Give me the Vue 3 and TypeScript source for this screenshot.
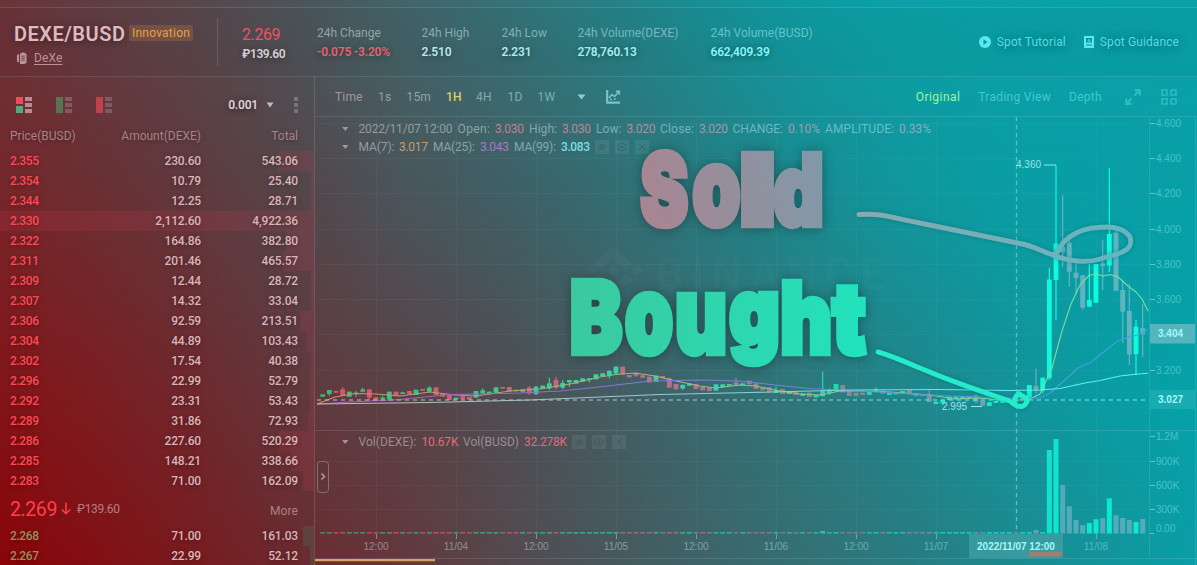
<script setup lang="ts">
interface Row { p: string; a: string; t: string; w: number }
interface Stat { label: string; value: string; lc: string; vc: string }
interface Candle { x: number; up: boolean; top: number; bot: number; hi: number; lo: number }
interface Letter { c: string; x: number; y: number; w: number; s: number }

const stats: Stat[] = [
  { label: '24h Change', value: '-0.075 -3.20%', lc: '#93a4a9', vc: '#e9606e' },
  { label: '24h High', value: '2.510', lc: '#87abb0', vc: '#bfe4e6' },
  { label: '24h Low', value: '2.231', lc: '#7fb1b5', vc: '#b3e9ea' },
  { label: '24h Volume(DEXE)', value: '278,760.13', lc: '#74b8bb', vc: '#a0eeee' },
  { label: '24h Volume(BUSD)', value: '662,409.39', lc: '#64c4c8', vc: '#86f6f6' },
]

const asks: Row[] = [
  { p: '2.355', a: '230.60', t: '543.06', w: 36 },
  { p: '2.354', a: '10.79', t: '25.40', w: 3 },
  { p: '2.344', a: '12.25', t: '28.71', w: 3 },
  { p: '2.330', a: '2,112.60', t: '4,922.36', w: 314 },
  { p: '2.322', a: '164.86', t: '382.80', w: 27 },
  { p: '2.311', a: '201.46', t: '465.57', w: 31 },
  { p: '2.309', a: '12.44', t: '28.72', w: 3 },
  { p: '2.307', a: '14.32', t: '33.04', w: 3 },
  { p: '2.306', a: '92.59', t: '213.51', w: 14 },
  { p: '2.304', a: '44.89', t: '103.43', w: 7 },
  { p: '2.302', a: '17.54', t: '40.38', w: 3 },
  { p: '2.296', a: '22.99', t: '52.79', w: 4 },
  { p: '2.292', a: '23.31', t: '53.43', w: 4 },
  { p: '2.289', a: '31.86', t: '72.93', w: 6 },
  { p: '2.286', a: '227.60', t: '520.29', w: 35 },
  { p: '2.285', a: '148.21', t: '338.66', w: 23 },
  { p: '2.283', a: '71.00', t: '162.09', w: 11 },
]
const bids: Row[] = [
  { p: '2.268', a: '71.00', t: '161.03', w: 11 },
  { p: '2.267', a: '22.99', t: '52.12', w: 4 },
]

const frames = [
  { t: 'Time', w: 43, c: '#a2999d' },
  { t: '1s', w: 28.5, c: '#9c9ca0' },
  { t: '15m', w: 39.5, c: '#93a1a5' },
  { t: '1H', w: 30, c: '#dccb6c' },
  { t: '4H', w: 31.5, c: '#86a9ad' },
  { t: '1D', w: 30, c: '#80adb1' },
  { t: '1W', w: 39.5, c: '#7ab1b5' },
]

// Direction, body top/bottom and optional wick high/low, in thirds of a pixel below y = 375.
const small = `u58,65 u45,57,45,62 d48,53 d43,62,37,62 u50,65 u53,57,48,65 u43,50,38,52 d43,68,43,75 d67,77 u68,73,62,75
u50,73 d50,62 u52,57 d48,57 u44,60 d42,47 u38,50,34,50 d37,60 d57,65 d60,75 u68,74 d64,72,60,75 d66,74 u48,68 u46,55,40,58 u50,58
u37,53 d36,41 d36,50 d44,49 u43,50 d38,55,33,60 u35,57,33,60 u32,42 u25,40,8,45 d15,38,5,42 u24,38,15,42 u15,22,15,35 u15,26 u10,20
u10,15,10,22 u-2,13 u-5,3 u-12,1,-15,10 u-25,-4 d-25,-2 d0,7 d-5,2,-8,6 d1,8 d5,22 u2,20 d3,10 d10,38 d27,43 u30,40,28,45 u25,32
d27,42 d36,46 d38,48 u28,47 u28,37 u27,32 d22,32,8,32 u25,31 d17,28 d25,42 d37,46 d37,52 u45,54,35,54 d42,57 u48,57 d50,60
u55,63 d53,66 u60,67 u48,64,-10,64 u45,55,40,60 u27,48 d30,52 d48,63 d53,63 d53,60 u50,60 u42,48,37,52 d47,56 u53,60 u52,58 u48,57
d45,58 d55,63 d57,63 d57,81,42,81 u80,87 u75,85,72,90 u65,75 u64,72 u64,72 u64,70 d62,80,58,85 d77,92 u82,93 u77,84 u77,84 u76,84
d74,82 u60,75 u30,73,30,82 d33,47,-20,55 u8,47,8,55`

const xAt = (i: number): number => 322.67 + i * (20 / 3)

const candles: Candle[] = small.trim().split(/\s+/).map((s, i) => {
  const n = s.slice(1).split(',').map(v => 375 + Number(v) / 3)
  return { x: xAt(i), up: s[0] === 'u', top: n[0], bot: n[1], hi: n[2] ?? n[0], lo: n[3] ?? n[1] }
})
const large: [number, boolean, number, number, number, number][] = [
  [109, true, 279.5, 378.3, 267.7, 380], [110, true, 243.5, 280, 165, 320], [111, false, 247, 252, 195, 267],
  [112, false, 242.7, 271.7, 240, 287], [113, false, 272.7, 278, 258, 294], [114, false, 275.3, 307.7, 275, 309.5],
  [115, true, 300, 306.7, 264, 306.7], [116, true, 264, 302.7, 264, 302.7], [117, false, 263.5, 266, 240, 290],
  [118, true, 234, 265.5, 168, 272], [119, false, 232.7, 290.7, 229, 290.7], [120, false, 290, 311.7, 281, 343],
  [121, false, 311, 354.5, 284, 365], [122, true, 326.7, 354, 320, 375], [123, false, 328, 334, 304, 356.7],
]
large.forEach(([i, up, top, bot, hi, lo]) => candles.push({ x: xAt(i), up, top, bot, hi, lo }))

const volTop: Record<number, number> = {
  75: 531, 107: 530, 109: 450, 110: 439, 111: 485, 112: 506.3, 113: 520, 114: 525.3, 115: 523, 116: 519.3,
  117: 518.3, 118: 498.3, 119: 515.3, 120: 518, 121: 520, 122: 522, 123: 519,
}
const volumes = candles.map((c, i) => ({ x: c.x, up: c.up, y: volTop[i] ?? 532.2 }))

const vGrid = [376, 456, 536, 616, 696, 776, 856, 936, 1016, 1096]
const hGrid = [123.5, 158.5, 193.5, 229.5, 264.5, 299.5, 334.5, 370.5, 461.5, 485.5, 509.5]
const prices = [
  ['4.600', 123.5], ['4.400', 158.5], ['4.200', 193.5], ['4.000', 229], ['3.800', 264], ['3.600', 299], ['3.200', 370],
  ['1.2M', 436], ['900K', 461], ['600K', 485], ['300K', 509],
] as [string, number][]
const dates = [
  ['12:00', 376], ['11/04', 456], ['12:00', 536], ['11/05', 616], ['12:00', 696], ['11/06', 776],
  ['12:00', 856], ['11/07', 936], ['11/08', 1096],
] as [string, number][]

const ohlc: [string, string, number][] = [
  ['Open:', '3.030', 457.5], ['High:', '3.030', 529], ['Low:', '3.020', 596], ['Close:', '3.020', 660],
  ['CHANGE:', '0.10%', 732.5], ['AMPLITUDE:', '0.33%', 825],
]
const valueX = [495, 562, 626.5, 699, 788, 899]

// Each letter has its own width and size, which gives the words their tall, tight poster shape.
const sold: Letter[] = [
  { c: 'S', x: 640.5, y: 225, w: 47.5, s: 99 },
  { c: 'o', x: 692.5, y: 225, w: 48, s: 106 },
  { c: 'l', x: 739, y: 225, w: 37, s: 97 },
  { c: 'd', x: 773.5, y: 225, w: 50, s: 97 },
]
const bought: Letter[] = [
  { c: 'B', x: 570, y: 352.5, w: 52, s: 99 },
  { c: 'o', x: 625, y: 352.5, w: 48, s: 106 },
  { c: 'u', x: 675, y: 352.5, w: 52, s: 106 },
  { c: 'g', x: 729.5, y: 343.5, w: 50, s: 91 },
  { c: 'h', x: 780.5, y: 352.5, w: 51.5, s: 97 },
  { c: 't', x: 832.5, y: 352.5, w: 33, s: 97 },
]
</script>

<template>
  <div class="screen">
    <div class="tint t4"></div>
    <div class="tint t3"></div>
    <div class="tint t2"></div>
    <div class="tint t1"></div>

    <div class="page">
      <div class="strip"></div>
      <header class="header">
        <div class="pair">
          <div class="pair-top"><span class="symbol">DEXE/BUSD</span><span class="badge">Innovation</span></div>
          <div class="pair-sub">
            <svg width="10" height="12" viewBox="0 0 10 12"><path d="M0 3 2 2V10.500L0 9.500ZM3 2l2-1.500h2L9.500 2v9L7 12H3Z" fill="#b99499" /><path d="M4.300 4.200h3.500M4.300 6.200h3.500M4.300 8.200h3.500" stroke="#6d4247" /></svg>
            <a>DeXe</a>
          </div>
        </div>
        <div class="stats">
          <div class="stat last"><span class="big">2.269</span><b>₽139.60</b></div>
          <div v-for="s in stats" :key="s.label" class="stat">
            <span class="label" :style="{ color: s.lc }">{{ s.label }}</span>
            <b :style="{ color: s.vc }">{{ s.value }}</b>
          </div>
        </div>
        <div class="links">
          <svg width="12" height="12" viewBox="0 0 12 12"><circle cx="6" cy="6" r="6" fill="#5be8ef" /><path d="M4.500 3.300 8.500 6l-4 2.700Z" fill="#0a949b" /></svg>
          <span>Spot Tutorial</span>
          <svg class="doc" width="10" height="12" viewBox="0 0 10 12"><path d="M0 0h10v12H0Z" fill="#5be8ef" /><path d="M2 2h6v4.500H2ZM2 8.500h6v1H2Z" fill="#0a949b" /><path d="M3.500 5h3M5 3v1.500" stroke="#5be8ef" /></svg>
          <span>Spot Guidance</span>
        </div>
      </header>

      <main class="main">
        <section class="book">
          <div class="book-tools">
            <svg width="16" height="16" viewBox="0 0 16 16"><path d="M0 0h7v7H0Z" fill="#f6475d" /><path d="M0 9h7v7H0Z" fill="#55a878" /><path d="M9 0h7v4H9ZM9 6h7v4H9ZM9 12h7v4H9Z" fill="#b98a92" /></svg>
            <svg width="16" height="16" viewBox="0 0 16 16"><path d="M0 0h7v16H0Z" fill="#587455" /><path d="M9 0h7v4H9ZM9 6h7v4H9ZM9 12h7v4H9Z" fill="#85595f" /></svg>
            <svg width="16" height="16" viewBox="0 0 16 16"><path d="M0 0h7v16H0Z" fill="#c0414e" /><path d="M9 0h7v4H9ZM9 6h7v4H9ZM9 12h7v4H9Z" fill="#7d5b62" /></svg>
            <b class="tick">0.001</b>
            <svg width="8" height="6" viewBox="0 0 8 6"><path d="M.5 .5h7L4 5.500Z" fill="#c3b7bb" /></svg>
            <svg class="dots" width="4" height="16" viewBox="0 0 4 16"><g fill="#7d7377"><rect width="4" height="4" rx="1" /><rect y="6" width="4" height="4" rx="1" /><rect y="12" width="4" height="4" rx="1" /></g></svg>
          </div>
          <div class="row head"><span>Price(BUSD)</span><span>Amount(DEXE)</span><span>Total</span></div>
          <div v-for="r in asks" :key="r.p" class="row ask">
            <i :style="{ width: r.w + 'px' }"></i><span>{{ r.p }}</span><span>{{ r.a }}</span><span>{{ r.t }}</span>
          </div>
          <div class="mid">
            <span class="now">2.269</span>
            <svg width="10" height="13" viewBox="0 0 10 13"><path d="M5 .5v11M.8 7.500 5 11.700 9.200 7.500" fill="none" stroke="#ff4048" stroke-width="1.500" /></svg>
            <span class="fiat">₽139.60</span><span class="more">More</span>
          </div>
          <div v-for="r in bids" :key="r.p" class="row bid">
            <i :style="{ width: r.w + 'px' }"></i><span>{{ r.p }}</span><span>{{ r.a }}</span><span>{{ r.t }}</span>
          </div>
        </section>

        <section class="chart">
          <nav class="toolbar">
            <span v-for="f in frames" :key="f.t" :class="{ on: f.t === '1H' }" :style="{ width: f.w + 'px', color: f.c }">{{ f.t }}</span>
            <svg class="caret" width="9" height="6" viewBox="0 0 9 6"><path d="M.5 .5h8l-4 5Z" fill="#8cd0d3" /></svg>
            <svg width="15" height="14" viewBox="0 0 15 14"><path d="M1.200 0v12.700H14" fill="none" stroke="#79c4c9" stroke-width="2.200" /><path d="M3 8 6 4.500 8.500 6.500 13 1.500M10 1.200h3.300V4.500" fill="none" stroke="#79c4c9" stroke-width="1.600" /><path d="M4 9.500h2M8 9h1.800" stroke="#79c4c9" stroke-width="1.500" /></svg>
            <div class="modes">
              <span class="sel">Original</span><span>Trading View</span><span>Depth</span>
              <svg width="16" height="16" viewBox="0 0 16 16"><path d="M9.500 1.200H14.800V6.500M14.500 1.500 9.500 6.500M1.200 9.500V14.800H6.500M1.500 14.500 6.500 9.500" fill="none" stroke="#2fbac2" stroke-width="2.200" /></svg>
              <svg width="16" height="16" viewBox="0 0 16 16"><path d="M1 1h5v5H1ZM10 1h5v5h-5ZM1 10h5v5H1ZM10 10h5v5h-5Z" fill="none" stroke="#2fbac2" stroke-width="1.600" /></svg>
            </div>
          </nav>

          <svg class="plot" width="882" height="448" viewBox="315 117 882 448">
            <defs>
              <linearGradient id="up" gradientUnits="userSpaceOnUse" x1="316" y1="0" x2="1060" y2="0">
                <stop offset="0" stop-color="#42b47e" /><stop offset=".4" stop-color="#38d3a3" /><stop offset=".75" stop-color="#22d8b3" /><stop offset="1" stop-color="#0ffbdc" />
              </linearGradient>
              <linearGradient id="down" gradientUnits="userSpaceOnUse" x1="316" y1="0" x2="1060" y2="0">
                <stop offset="0" stop-color="#de5266" /><stop offset=".4" stop-color="#bd6f82" /><stop offset=".72" stop-color="#938493" /><stop offset="1" stop-color="#62b3bf" />
              </linearGradient>
              <linearGradient id="ma7" gradientUnits="userSpaceOnUse" x1="316" y1="0" x2="1140" y2="0">
                <stop offset="0" stop-color="#c8925a" /><stop offset="1" stop-color="#76dfa8" />
              </linearGradient>
              <linearGradient id="ma25" gradientUnits="userSpaceOnUse" x1="316" y1="0" x2="1140" y2="0">
                <stop offset="0" stop-color="#b45abf" /><stop offset="1" stop-color="#3aa6df" />
              </linearGradient>
              <linearGradient id="ma99" gradientUnits="userSpaceOnUse" x1="316" y1="0" x2="1140" y2="0">
                <stop offset="0" stop-color="#c4b4bd" /><stop offset=".6" stop-color="#7fd6d8" /><stop offset="1" stop-color="#52f7f7" />
              </linearGradient>
              <linearGradient id="txt" gradientUnits="userSpaceOnUse" x1="330" y1="0" x2="940" y2="0">
                <stop offset="0" stop-color="#9c9599" /><stop offset="1" stop-color="#5ac7cd" />
              </linearGradient>
              <linearGradient id="val" gradientUnits="userSpaceOnUse" x1="480" y1="0" x2="940" y2="0">
                <stop offset="0" stop-color="#bf7f8c" /><stop offset="1" stop-color="#82b1bb" />
              </linearGradient>
              <linearGradient id="dat" gradientUnits="userSpaceOnUse" x1="350" y1="0" x2="1110" y2="0">
                <stop offset="0" stop-color="#9c8286" /><stop offset=".5" stop-color="#82a2a6" /><stop offset="1" stop-color="#4bbbc1" />
              </linearGradient>
            </defs>

            <g class="grid">
              <path v-for="x in vGrid" :key="'v' + x" :d="`M${x + .5} 117V533`" />
              <path v-for="y in hGrid" :key="'h' + y" :d="`M317 ${y}H1149`" />
            </g>
            <g class="mark">
              <path d="M594 264 613 246 632 264 626 270 613 258 600 270ZM608 270l5-5 5 5-5 5ZM586 270l5-5 5 5-5 5ZM631 270l6-6 6 6-6 6ZM600 274l13 12 13-12 6 6-19 18-19-18Z" />
              <text x="656" y="289" textLength="229">BINANCE</text>
            </g>
            <path class="rule" d="M315 430.500H1197M315 558.500H1197M1149.500 117V558M1195.500 117V565" />

            <g class="axis">
              <template v-for="[t, y] in prices" :key="t">
                <path :d="`M1150 ${Math.floor(y) + .5}h5`" />
                <text x="1156" :y="y + 3.700">{{ t }}</text>
              </template>
              <text x="1156" y="532">0.00</text><path d="M1150 533.500h4" />
            </g>
            <g class="dates">
              <template v-for="[t, x] in dates" :key="t + x">
                <path :d="`M${x + .5} 534v5`" /><text :x="x" y="549.500">{{ t }}</text>
              </template>
            </g>

            <g opacity=".8">
              <rect v-for="v in volumes" :key="v.x" :x="v.x - 2.500" :y="v.y" width="5" :height="533.500 - v.y" :fill="v.up ? 'url(#up)' : 'url(#down)'" />
            </g>
            <g>
              <template v-for="c in candles" :key="c.x">
                <rect :x="c.x - .6" :y="c.hi" width="1.200" :height="c.lo - c.hi" :fill="c.up ? 'url(#up)' : 'url(#down)'" />
                <rect :x="c.x - 2.400" :y="c.top" width="4.800" :height="c.bot - c.top" :fill="c.up ? 'url(#up)' : 'url(#down)'" />
              </template>
            </g>
            <g class="ma">
              <polyline stroke="url(#ma7)" points="317,404 335,397 355,393.500 376,394 400,396 430,392 455,395 476,396 510,391 540,389 570,384 600,377 616,374.500 635,373 655,376 676,381 700,386 715,388 740,385 755,386 780,391 800,394 820,395 840,391 860,391 890,392 930,395 955,399 980,398 1010,401 1030,399 1040,394 1052,368 1062,331 1071,304 1080,285 1089,275.500 1096,274 1103,276 1110,274.500 1118,277 1128,286 1136,292 1142,299 1148,311" />
              <polyline stroke="url(#ma25)" points="317,404 350,402 400,399.500 450,394.500 520,393 560,391 590,388 620,384.500 650,381 700,380 740,381 775,385 810,388.500 860,391 950,396 1010,398 1040,398 1050,393 1065,380 1078,368 1091,362 1105,351 1116,342 1128,337 1140,334.500 1148,329" />
              <polyline stroke="url(#ma99)" points="317,404 430,402.500 530,400 600,397 660,394.500 750,392.500 850,390 940,389.500 1010,390.500 1040,390 1060,388.500 1085,383 1100,380.500 1120,376 1135,374.300 1148,373.300" />
            </g>
            <path class="cross" d="M317 400H1149" stroke="url(#ma99)" />
            <path class="cross" d="M1016.500 117V533" stroke="#76cfd2" />
            <g class="peaks"><text x="1016" y="168">4.360</text><path d="M1044 165h12" /><text x="942" y="410">2.995</text><path d="M971 406.500h11" /></g>

            <g class="tags">
              <rect x="1150" y="324" width="45" height="19.500" fill="#55b5bd" /><text x="1170.500" y="337.300">3.404</text>
              <rect x="1150" y="390" width="45" height="19" fill="#18abb1" /><text x="1170.500" y="403.300">3.027</text>
              <rect x="969" y="534" width="94" height="24" fill="#42a0a4" fill-opacity=".75" /><text x="1016" y="549.500">2022/11/07 12:00</text>
            </g>
            <rect x="1029" y="552" width="33" height="4.500" rx="1" fill="#a17f70" />

            <g class="legend">
              <path v-for="y in [127, 145, 440]" :key="y" :d="`M342 ${y}h6.500l-3.200 4Z`" fill="url(#txt)" />
              <text x="358.500" y="133" textLength="94">2022/11/07 12:00</text>
              <template v-for="([k, v, x], i) in ohlc" :key="k">
                <text :x="x" y="133" :textLength="valueX[i] - x - 5">{{ k }}</text>
                <text :x="valueX[i]" y="133" :textLength="i > 3 ? 32 : 29" fill="url(#val)">{{ v }}</text>
              </template>
              <text x="358.500" y="151" textLength="36">MA(7):</text><text x="399" y="151" textLength="29" class="c7">3.017</text>
              <text x="433" y="151" textLength="42">MA(25):</text><text x="480" y="151" textLength="29" class="c25">3.043</text>
              <text x="514" y="151" textLength="42">MA(99):</text><text x="561" y="151" textLength="29" class="c99">3.083</text>
              <text x="358.500" y="446" textLength="58" class="muted">Vol(DEXE):</text><text x="421.500" y="446" textLength="37" class="red">10.67K</text>
              <text x="463" y="446" textLength="56" class="muted">Vol(BUSD)</text><text x="524" y="446" textLength="43" class="red">32.278K</text>
              <g v-for="[x, y] in [[595, 140], [572, 435]]" :key="x" :transform="`translate(${x} ${y})`">
                <path class="box" d="M0 0h14v14H0ZM20 0h14v14H20ZM40 0h14v14H40Z" />
                <path class="glyph" d="M3 7q4-5 8 0q-4 5-8 0ZM27 3l4 2v4l-4 2-4-2V5ZM44 4l6 6M50 4l-6 6" /><circle class="glyph" cx="7" cy="7" r="1.200" /><circle class="glyph" cx="27" cy="7" r="1.200" />
              </g>
            </g>

            <rect x="317.500" y="461.500" width="11" height="31" rx="3" fill="#5b373b" fill-opacity=".5" stroke="#8a6c71" />
            <path d="M321.500 473.500 324.500 476.500 321.500 479.500" fill="none" stroke="#c3a9ad" stroke-width="1.200" />
            <path d="M315 559h120v2.200H315Z" fill="#dda15f" />
          </svg>
        </section>
      </main>
    </div>

    <svg class="notes" width="1197" height="565" viewBox="0 0 1197 565">
      <defs>
        <linearGradient id="sold" gradientUnits="userSpaceOnUse" x1="641" x2="821" y1="190" y2="150"><stop offset="0" stop-color="#a98592" /><stop offset="1" stop-color="#8099a8" /></linearGradient>
        <linearGradient id="bought" gradientUnits="userSpaceOnUse" x1="571" x2="865" y1="0" y2="0"><stop offset="0" stop-color="#3bc99e" /><stop offset="1" stop-color="#22e2bd" /></linearGradient>
        <linearGradient id="pen" gradientUnits="userSpaceOnUse" x1="857" y1="0" x2="1130" y2="0"><stop offset="0" stop-color="#84abb0" /><stop offset="1" stop-color="#62b6c1" /></linearGradient>
      </defs>
      <text class="word" fill="url(#sold)" stroke="url(#sold)"><tspan v-for="l in sold" :key="l.c" :x="l.x" :y="l.y" :font-size="l.s" :textLength="l.w" lengthAdjust="spacingAndGlyphs">{{ l.c }}</tspan></text>
      <text class="word" fill="url(#bought)" stroke="url(#bought)"><tspan v-for="l in bought" :key="l.c" :x="l.x" :y="l.y" :font-size="l.s" :textLength="l.w" lengthAdjust="spacingAndGlyphs">{{ l.c }}</tspan></text>
      <path class="pen" stroke="url(#pen)" d="M859 214.500C880 213 890 217 915 222L1020 243.500C1035 246 1042 252 1053 255C1060 253 1060 244 1066 240C1076 231 1090 227 1102 227.300C1116 226 1126 230 1130 237C1132 244 1130 248 1124 251C1116 256 1110 255 1100 259C1088 263 1070 262 1053 255" />
      <path class="pen green" d="M878 352C890 355 910 364 925 370C950 381 980 391 1010 401Q1016 407 1022 406.500Q1028 404 1026.500 398Q1022 396 1018.500 393.500Q1014 398 1014.500 402" />
    </svg>
  </div>
</template>

<style>
body { margin: 0; overflow: hidden; }
</style>

<style scoped>
.screen { position: relative; width: 1197px; height: 565px; overflow: hidden; font-family: Roboto, "Liberation Sans", sans-serif; font-size: 12px; }
.tint { position: absolute; inset: 0; }
.t4 { background: linear-gradient(90deg, #8b0509 0, #821014 100px, #781c20 200px, #6b2b30 300px, #63383c 400px, #56484d 500px, #48575c 600px, #3f6468 700px, #347075 800px, #2a7b80 900px, #1f888e 1000px, #13949b 1100px, #0a9fa7 1197px); }
.t3 { background: linear-gradient(90deg, #82161a 0, #7a1f23 100px, #6d2b30 200px, #603a3e 300px, #594347 400px, #4f4d52 500px, #455b60 600px, #38696e 700px, #2d787c 800px, #20868b 900px, #149299 1000px, #0a9ca3 1100px, #06a1a8 1197px); mask-image: linear-gradient(#000 380px, transparent 565px); }
.t2 { background: linear-gradient(90deg, #76272b 0, #6a3034 100px, #5f3b3f 200px, #54464a 300px, #4a555b 400px, #405f65 500px, #356c71 600px, #277c81 700px, #1a8b90 800px, #10979d 900px, #0a9da4 1000px, #08a0a7 1197px); mask-image: linear-gradient(#000 190px, transparent 380px); }
.t1 { background: linear-gradient(90deg, #6b3439 0, #603e43 100px, #57484d 200px, #4c555a 300px, #436469 400px, #367176 500px, #288085 600px, #198f95 700px, #0e9ba2 800px, #0ba0a7 900px, #0aa1a8 1197px); mask-image: linear-gradient(#000, transparent 190px); }
.page { position: relative; height: 565px; display: flex; flex-direction: column; }
.strip { height: 7px; flex: none; border-bottom: 1px solid rgba(190, 220, 225, .15); }
.header { height: 68px; flex: none; display: flex; align-items: center; border-bottom: 1px solid rgba(190, 220, 225, .15); background: rgba(10, 20, 25, .03); }
.pair { width: 218px; height: 48px; box-sizing: border-box; padding: 6px 0 0 14px; border-right: 1px solid rgba(190, 200, 205, .18); }
.pair-top { display: flex; align-items: center; height: 20px; }
.symbol { width: 115px; font-size: 20px; font-weight: 600; letter-spacing: .5px; color: #dfb9be; text-shadow: 0 1px 7px rgba(20, 10, 15, .5); }
.badge { height: 16px; line-height: 16px; margin-top: -2px; padding: 0 3px; background: rgba(190, 130, 70, .28); color: #e3a04f; font-size: 12px; letter-spacing: .22px; border-radius: 1px; }
.pair-sub { display: flex; align-items: center; gap: 7px; margin: 6px 0 0 3px; height: 16px; color: #b99499; letter-spacing: .1px; }
.pair-sub a { text-decoration: underline; text-underline-offset: 2px; }
.stats { display: grid; grid-template-columns: 75px 104.5px 80px 76px 133px 130px; padding: 2px 0 0 24px; }
.stat { display: flex; flex-direction: column; height: 38px; white-space: nowrap; }
.stat .label { line-height: 18px; font-size: 12px; letter-spacing: 0; }
.stat b { line-height: 20px; font-weight: 600; letter-spacing: -.2px; text-shadow: 0 1px 6px rgba(0, 20, 25, .45); }
.last { color: #d8d0d3; }
.last .big { line-height: 22px; font-size: 16px; color: #ec5364; letter-spacing: -.4px; }
.stat.last b { line-height: 16px; letter-spacing: -.4px; }
.links { margin-left: auto; padding-right: 18px; display: flex; align-items: center; color: #55dbe3; letter-spacing: .1px; text-shadow: 0 1px 8px rgba(0, 50, 60, .5); }
.links span { margin-left: 6px; }
.links .doc { margin-left: 18px; }
.main { flex: 1; min-height: 0; display: flex; }
.book { width: 314px; height: 488px; overflow: hidden; border-right: 1px solid rgba(190, 160, 165, .25); }
.book-tools { height: 49px; box-sizing: border-box; padding: 7px 16px 0; display: flex; align-items: center; gap: 24px; }
.tick { margin-left: auto; margin-right: -16px; font-weight: 600; color: #ddd0d3; letter-spacing: -.2px; text-shadow: 0 1px 6px rgba(20, 10, 15, .6); }
.dots { margin: 0 0 0 -4px; }
.row { position: relative; height: 20px; line-height: 20px; display: grid; grid-template-columns: 80px 111px 97px; padding-left: 10px; color: #d9b4b8; font-weight: 500; letter-spacing: -.16px; text-shadow: 0 1px 5px rgba(30, 10, 15, .35); }
.row span { position: relative; }
.row span:nth-last-child(-n+2) { text-align: right; }
.row i { position: absolute; right: 0; top: 0; bottom: 0; background: rgba(220, 60, 85, .15); }
.row.head { height: 25px; align-items: start; font-weight: 400; color: #a68388; letter-spacing: 0; }
.ask span:nth-child(2) { color: #fb4b54; letter-spacing: -.4px; }
.bid span:nth-child(2) { color: #9a8f5b; letter-spacing: -.4px; }
.bid i { background: rgba(60, 150, 100, .2); }
.mid { height: 35px; display: flex; align-items: center; padding: 0 16px 0 10px; }
.now { margin-top: 1px; font-size: 19.500px; color: #ff3f48; letter-spacing: -.4px; width: 51px; }
.fiat { margin-left: 6px; color: #b27e82; letter-spacing: -.3px; }
.more { margin: 4px 0 0 auto; color: #a98085; letter-spacing: .1px; }
.chart { width: 882px; }
.toolbar { height: 39px; display: flex; align-items: center; padding-left: 20px; border-bottom: 1px solid rgba(190, 220, 225, .15); letter-spacing: .15px; }
.on { font-weight: 500; }
.caret { margin: 0 20px 0 0; }
.modes { margin-left: auto; padding-right: 20px; display: flex; align-items: center; color: #42c8d0; letter-spacing: .3px; }
.modes span { margin-right: 18px; }
.modes span:nth-of-type(3) { margin-right: 23px; }
.modes svg:last-child { margin-left: 20px; }
.modes .sel { color: #9df5a6; letter-spacing: .45px; }
.plot { display: block; }
.grid path { fill: none; stroke: rgba(200, 215, 220, .05); stroke-width: 1; }
.rule { fill: none; stroke: rgba(190, 225, 230, .15); }
.mark { fill: rgba(190, 205, 210, .045); }
.mark text { font: 700 44px Roboto, sans-serif; }
.axis text, .dates text, .peaks text, .tags text { font: 10px "Liberation Sans", Arial, sans-serif; }
.axis { fill: #46c3ca; }
.axis path { stroke: #5dc6cb; }
.dates text { fill: url(#dat); text-anchor: middle; }
.dates path { stroke: rgba(190, 205, 210, .5); }
.ma polyline { fill: none; stroke-width: 1.100; stroke-linejoin: round; }
.cross { fill: none; stroke-width: 1.400; stroke-dasharray: 4 4; opacity: .7; }
.peaks { fill: #9be5e6; }
.peaks path { stroke: #8ceeee; }
.tags text { font-weight: 700; fill: #a4f8f7; text-anchor: middle; }
.legend text { font-size: 12px; }
.legend { fill: url(#txt); }
.legend .c7 { fill: #c49d72; }
.legend .c25 { fill: #a57ac4; }
.legend .c99 { fill: #79dfe2; font-weight: 500; }
.legend .muted { fill: #998e92; }
.legend .red { fill: #e56b79; }
.box { fill: rgba(150, 185, 190, .14); }
.glyph { fill: none; stroke: rgba(40, 65, 70, .35); }
.notes { position: absolute; inset: 0; pointer-events: none; }
.word { font-family: Inter, Roboto, "Liberation Sans", sans-serif; font-weight: 900; stroke-width: 6.500; stroke-linejoin: miter; stroke-miterlimit: 3; filter: drop-shadow(0 1px 6px rgba(15, 30, 35, .45)); }
.pen { fill: none; stroke-width: 5; stroke-linecap: round; stroke-linejoin: round; filter: drop-shadow(0 0 2px rgba(0, 60, 65, .3)); }
.green { stroke: #22ecca; }
</style>
